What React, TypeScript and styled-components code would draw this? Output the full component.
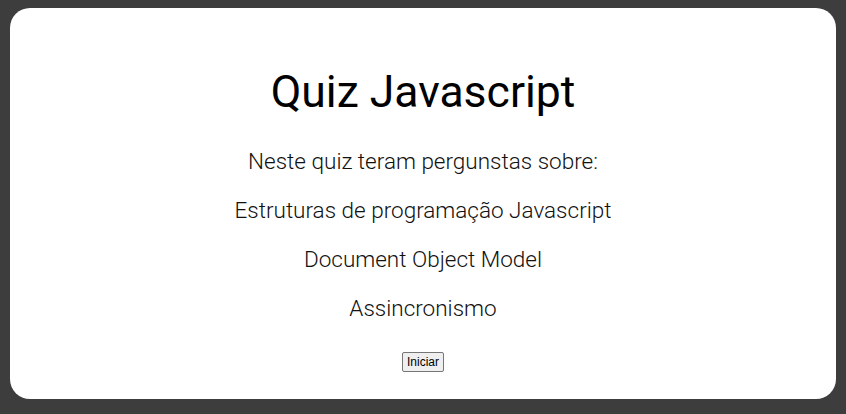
import { createGlobalStyle, styled } from "styled-components"

const GlobalStyle = createGlobalStyle`
  html, body {
    margin: 0;
    padding: 0;
    height: 100%;
    background-color: #3d3d3d;
  }
  #root {
    height: 100%;
  }
`

export default function App() {
  return (
    <>
      <GlobalStyle />
      <Page>
        <Card>
          <Title>Quiz Javascript</Title>
          <Intro>Neste quiz teram pergunstas sobre:</Intro>
          <Topic>Estruturas de programação Javascript</Topic>
          <Topic>Document Object Model</Topic>
          <Topic>Assincronismo</Topic>
          <StartButton type="button">Iniciar</StartButton>
        </Card>
      </Page>
    </>
  )
}

const Page = styled.div`
  height: 100%;
  box-sizing: border-box;
  padding: 8px 10px 15px 10px;
  display: flex;
`

const Card = styled.main`
  flex: 1;
  background: #fff;
  border-radius: 20px;
  display: flex;
  flex-direction: column;
  align-items: center;
  font-family: Roboto, "Noto Sans", sans-serif;
  font-weight: 300;
  color: #111;
  padding-top: 58px;
`

const Title = styled.h1`
  font-size: 44.5px;
  font-weight: 400;
  color: #000;
  margin: 0 0 30px 0;
`

const Intro = styled.p`
  font-size: 22.5px;
  margin: 0 0 23px 0;
`

const Topic = styled.p`
  font-size: 22.5px;
  margin: 0 0 23px 0;
`

const StartButton = styled.button`
  font-family: Arial, "Liberation Sans", sans-serif;
  font-size: 12px;
  padding: 2px 4px;
  margin-top: 8px;
  color: #000;
  background: #efefef;
  border: 1px solid #767676;
  border-radius: 2px;
`
